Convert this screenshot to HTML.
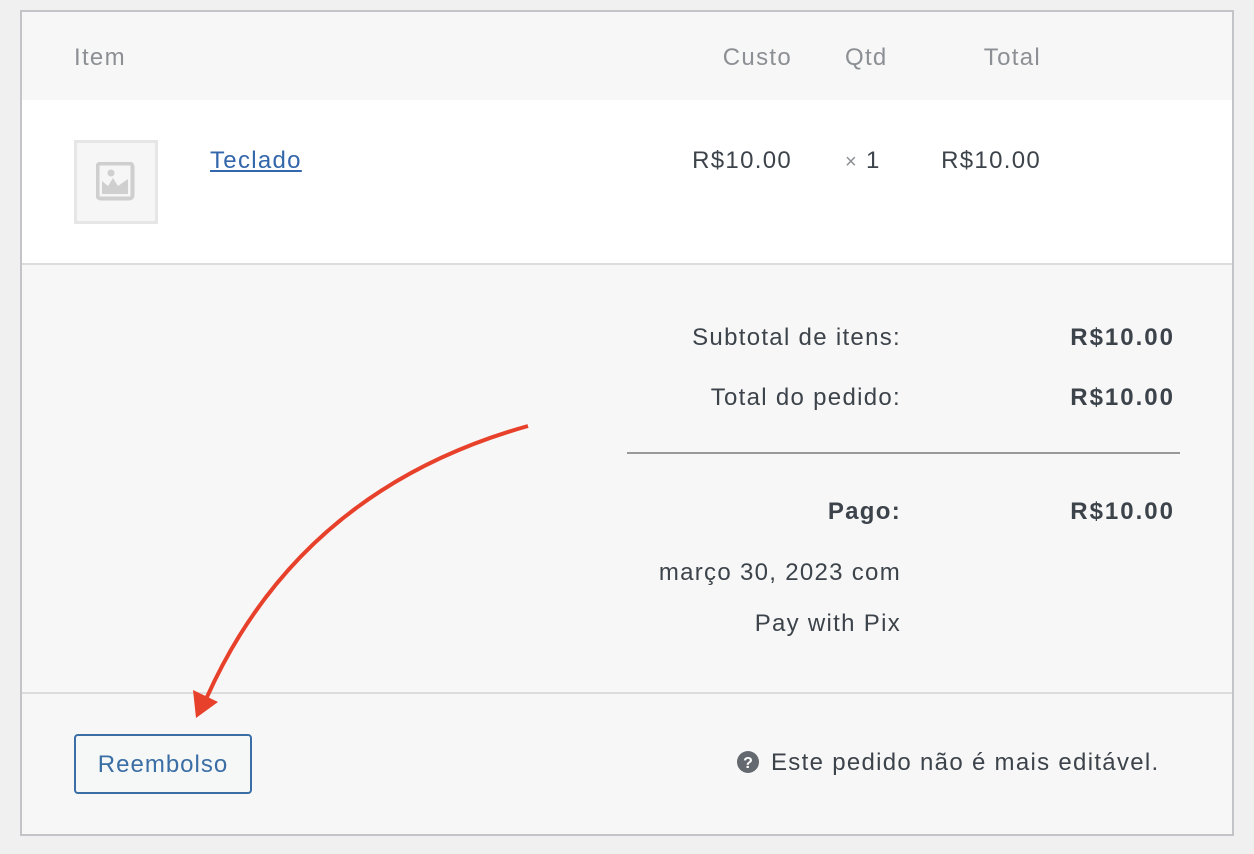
<!DOCTYPE html>
<html><head><meta charset="utf-8"><style>
body{margin:0;width:1254px;height:854px;background:#f0f0f1;font-family:"Liberation Sans",Arial,sans-serif;color:#3c434a;position:relative;overflow:hidden}
.a{position:absolute;white-space:nowrap;font-size:24px;line-height:30px;letter-spacing:1.3px}
.r{text-align:right}
.h{color:#8c8f94}
b{font-weight:700;letter-spacing:2px}
</style></head><body>
<div style="position:absolute;left:20px;top:10px;width:1210px;height:822px;border:2px solid #c3c4c7;background:#f7f7f7"></div>
<div style="position:absolute;left:22px;top:100px;width:1210px;height:163px;background:#fff;border-bottom:2px solid #dcdcde"></div>
<div style="position:absolute;left:22px;top:692px;width:1210px;height:2px;background:#dcdcde"></div>
<div class="a h" style="left:74px;top:43px">Item</div>
<div class="a h r" style="right:462px;top:43px">Custo</div>
<div class="a h" style="left:845px;top:43px">Qtd</div>
<div class="a h r" style="right:213px;top:43px">Total</div>
<div style="position:absolute;left:74px;top:140px;width:78px;height:78px;border:3px solid #e6e6e6;background:#f6f6f6"></div>
<svg style="position:absolute;left:96px;top:162px" width="40" height="40" viewBox="0 0 40 40"><rect x="1.5" y="1.5" width="35" height="35" rx="3" fill="none" stroke="#cfcfcf" stroke-width="4"/><circle cx="15" cy="11" r="3.5" fill="#cfcfcf"/><path d="M6 19 L12 24 L17 16 L22 24 L32 17 L32 32 L6 32Z" fill="#cfcfcf"/></svg>
<div class="a" style="left:210px;top:146px;text-decoration:underline;color:#3366aa">Teclado</div>
<div class="a r" style="right:462px;top:146px">R$10.00</div>
<div class="a" style="left:845px;top:146px"><span style="color:#8c8f94;font-size:20px">×</span> 1</div>
<div class="a r" style="right:213px;top:146px">R$10.00</div>
<div class="a r" style="right:353px;top:323px">Subtotal de itens:</div>
<div class="a r" style="right:79px;top:323px"><b>R$10.00</b></div>
<div class="a r" style="right:353px;top:383px">Total do pedido:</div>
<div class="a r" style="right:79px;top:383px"><b>R$10.00</b></div>
<div style="position:absolute;left:627px;top:452px;width:553px;height:2px;background:#999"></div>
<div class="a r" style="right:353px;top:497px"><b style="letter-spacing:1.3px">Pago:</b></div>
<div class="a r" style="right:79px;top:497px"><b>R$10.00</b></div>
<div class="a r" style="right:353px;top:558px">março 30, 2023 com</div>
<div class="a r" style="right:353px;top:609px">Pay with Pix</div>
<div style="position:absolute;left:74px;top:734px;width:174px;height:56px;border:2px solid #3a6ea5;border-radius:4px;background:#f6f7f7;color:#3a6ea5;font-size:24px;line-height:58px;text-align:center;letter-spacing:1px">Reembolso</div>
<svg style="position:absolute;left:737px;top:751px" width="22" height="22" viewBox="0 0 22 22"><circle cx="11" cy="11" r="11" fill="#646970"/><text x="11" y="17" font-size="16" font-weight="700" text-anchor="middle" fill="#fff" font-family="Liberation Sans">?</text></svg>
<div class="a" style="left:771px;top:748px">Este pedido não é mais editável.</div>
<svg style="position:absolute;left:0;top:0" width="1254" height="854"><path d="M528 426 Q300 490 207 697" fill="none" stroke="#e8412b" stroke-width="4"/><path d="M196 718 L193 690 L218 702Z" fill="#e8412b"/></svg>
</body></html>
